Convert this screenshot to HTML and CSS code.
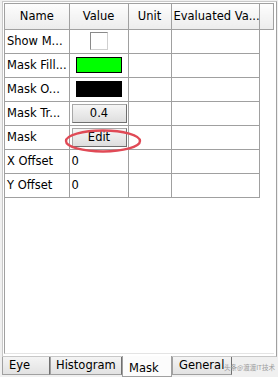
FILE: index.html
```html
<!DOCTYPE html>
<html lang="en">
<head>
    <meta charset="UTF-8">
    <title>Mask Properties</title>
    <link rel="stylesheet" href="styles.css">
</head>
<body>
    <div class="page">
        <div class="grid">
            <table class="props">
                <colgroup>
                    <col class="c-name">
                    <col class="c-value">
                    <col class="c-unit">
                    <col class="c-eval">
                    <col class="c-fill">
                </colgroup>
                <thead>
                    <tr>
                        <th>Name</th>
                        <th>Value</th>
                        <th>Unit</th>
                        <th class="left">Evaluated Va...</th>
                        <th></th>
                    </tr>
                </thead>
                <tbody>
                    <tr>
                        <td>Show M...</td>
                        <td class="center"><span class="check"></span></td>
                        <td></td><td></td>
                    </tr>
                    <tr>
                        <td>Mask Fill...</td>
                        <td class="center"><span class="swatch green"></span></td>
                        <td></td><td></td>
                    </tr>
                    <tr>
                        <td>Mask O...</td>
                        <td class="center"><span class="swatch black"></span></td>
                        <td></td><td></td>
                    </tr>
                    <tr>
                        <td>Mask Tr...</td>
                        <td class="center"><button class="btn">0.4</button></td>
                        <td></td><td></td>
                    </tr>
                    <tr>
                        <td>Mask</td>
                        <td class="center"><button class="btn">Edit</button></td>
                        <td></td><td></td>
                    </tr>
                    <tr>
                        <td>X Offset</td>
                        <td>0</td>
                        <td></td><td></td>
                    </tr>
                    <tr>
                        <td>Y Offset</td>
                        <td>0</td>
                        <td></td><td></td>
                    </tr>
                </tbody>
            </table>
            <svg class="mark" width="82" height="30" viewBox="0 0 82 30">
                <ellipse cx="40" cy="14" rx="37" ry="10.5" fill="none" stroke="#e04a56" stroke-width="2.4"/>
            </svg>
        </div>
    </div>
    <div class="tabs">
        <div class="tab t-eye">Eye</div>
        <div class="tab t-hist">Histogram</div>
        <div class="tab t-mask active">Mask</div>
        <div class="tab t-gen">General</div>
        <span class="watermark">头条@渡渡IT技术</span>
    </div>
</body>
</html>
```

FILE: styles.css
```css
* {
    margin: 0;
    padding: 0;
    box-sizing: border-box;
}

body {
    width: 278px;
    height: 377px;
    background: #f0f0f0;
    font-family: "DejaVu Sans", Tahoma, sans-serif;
    font-size: 11.5px;
    color: #000;
    overflow: hidden;
    position: relative;
}

.page {
    margin: 1px 1px 0 2px;
    height: 356px;
    border: 1px solid #c8c8c8;
    border-right-color: #a0a0a0;
    background: #fff;
    padding: 1px 2px 2px 1px;
}

.grid {
    position: relative;
    height: 100%;
    border: 1px solid #a0a0a0;
    border-right: none;
    border-bottom: 1px solid #e4e4e4;
    background: #fff;
}

.props {
    border-collapse: collapse;
    table-layout: fixed;
    width: 268px;
}

.c-name { width: 64px; }
.c-value { width: 59px; }
.c-unit { width: 43px; }
.c-eval { width: 88px; }
.c-fill { width: 14px; }

th {
    height: 25px;
    font-weight: normal;
    text-align: center;
    background: linear-gradient(#fdfdfd, #ececec);
    border-right: 1px solid #a0a0a0;
    border-bottom: 1px solid #a0a0a0;
    white-space: nowrap;
    overflow: hidden;
}

th.left {
    text-align: left;
    padding-left: 2px;
}

td {
    height: 24px;
    padding: 0 2px;
    border-right: 1px solid #a0a0a0;
    border-bottom: 1px solid #a0a0a0;
    white-space: nowrap;
    overflow: hidden;
}

td.center {
    text-align: center;
}

.check {
    display: inline-block;
    width: 18px;
    height: 18px;
    border: 1px solid #8a8a8a;
    border-right-color: #d0d0d0;
    border-bottom-color: #d0d0d0;
    background: #fff;
    vertical-align: middle;
}

.swatch {
    display: inline-block;
    width: 46px;
    height: 16px;
    border: 1px solid #000;
    vertical-align: middle;
}

.green { background: #00ff00; }
.black { background: #000; }

.btn {
    display: block;
    width: 55px;
    height: 19px;
    margin: 0 auto;
    font: inherit;
    background: linear-gradient(#f6f6f6, #dedede);
    border: 1px solid #a8a8a8;
    border-right-color: #707070;
    border-bottom-color: #707070;
}

.mark {
    position: absolute;
    left: 58px;
    top: 123px;
}

.tabs {
    display: flex;
    height: 20px;
    padding-left: 2px;
}

.tab {
    height: 18px;
    line-height: 17px;
    padding-left: 6px;
    background: linear-gradient(#f4f4f4, #e2e2e2);
    border: 1px solid #a0a0a0;
    border-top: none;
    border-right-color: #707070;
}

.t-eye { width: 48px; }
.t-hist { width: 72px; padding-left: 5px; }
.t-mask { width: 50px; }
.t-gen { width: 60px; }

.tab.active {
    height: 21px;
    margin-top: -1px;
    line-height: 25px;
    padding-left: 6px;
    background: #fcfcfc;
    border-color: #a0a0a0;
}

.watermark {
    position: absolute;
    left: 224px;
    top: 362px;
    white-space: nowrap;
    font-family: "Noto Sans CJK SC", sans-serif;
    font-size: 6.5px;
    color: #9a9a9a;
}
```
